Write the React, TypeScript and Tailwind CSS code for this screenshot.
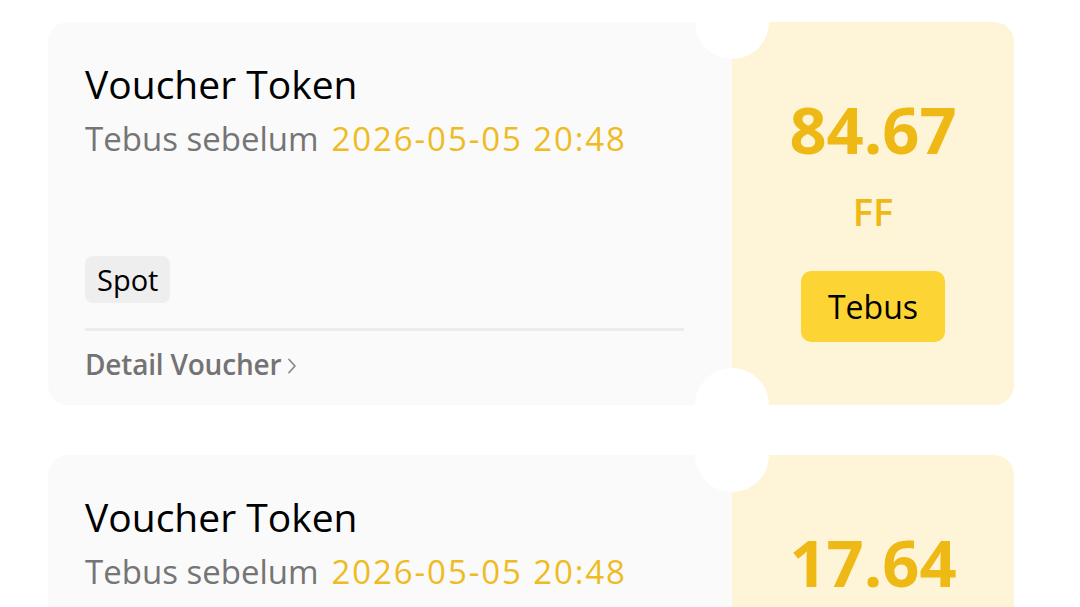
import React from "react";

const font = { fontFamily: "'Open Sans', 'Noto Sans', sans-serif" };

function Card({ value }: { value: string }) {
  return (
    <div className="relative flex w-[966px] h-[383px] shrink-0">
      <div className="flex-1 bg-[#fafafa] rounded-l-[20px] pl-[37px] pr-[48px] flex flex-col">
        <div className="mt-[38px] text-[39px] leading-[47px] font-medium text-black whitespace-nowrap">Voucher Token</div>
        <div className="mt-[12px] text-[33px] leading-[40px] text-[#757575] whitespace-nowrap">
          Tebus sebelum<span className="ml-[13px] tracking-[1.9px] text-[#efbb22]">2026-05-05 20:48</span>
        </div>
        <div className="mt-[97px] self-start h-[47px] px-[12px] rounded-[8px] bg-[#eeeeee] flex items-center text-[29px] text-black">
          Spot
        </div>
        <div className="mt-[25px] h-[3px] bg-[#ececec]" />
        <div className="mt-[16px] flex items-center gap-[5px] text-[28px] leading-[35px] font-semibold text-[#737373] whitespace-nowrap">
          <span className="tracking-[-0.2px]">Detail Voucher</span>
          <svg width="12" height="18" viewBox="0 0 12 18" fill="none" className="mt-[3px]">
            <path d="M3 2.5l6 6.5-6 6.5" stroke="#8a8a8a" strokeWidth="1.8" strokeLinecap="round" strokeLinejoin="round" />
          </svg>
        </div>
      </div>
      <div className="w-[282px] bg-[#fef5d8] rounded-r-[20px] flex flex-col items-center">
        <div className="mt-[69px] text-[65px] leading-[77px] font-bold text-[#efb915]">{value}</div>
        <div className="mt-[20px] text-[38px] leading-[46px] font-semibold text-[#efb915]">FF</div>
        <button className="mt-[37px] w-[144px] h-[71px] rounded-[10px] bg-[#fcd535] flex items-center justify-center text-[32px] font-medium text-black">
          Tebus
        </button>
      </div>
      <div className="absolute left-[647px] top-[-37px] w-[74px] h-[74px] rounded-full bg-white" />
      <div className="absolute left-[647px] bottom-[-37px] w-[74px] h-[74px] rounded-full bg-white" />
    </div>
  );
}

export default function App() {
  return (
    <div style={font} className="w-[1080px] h-[607px] overflow-hidden bg-white pt-[22px] pl-[48px] flex flex-col gap-[50px]">
      <Card value="84.67" />
      <Card value="17.64" />
    </div>
  );
}
